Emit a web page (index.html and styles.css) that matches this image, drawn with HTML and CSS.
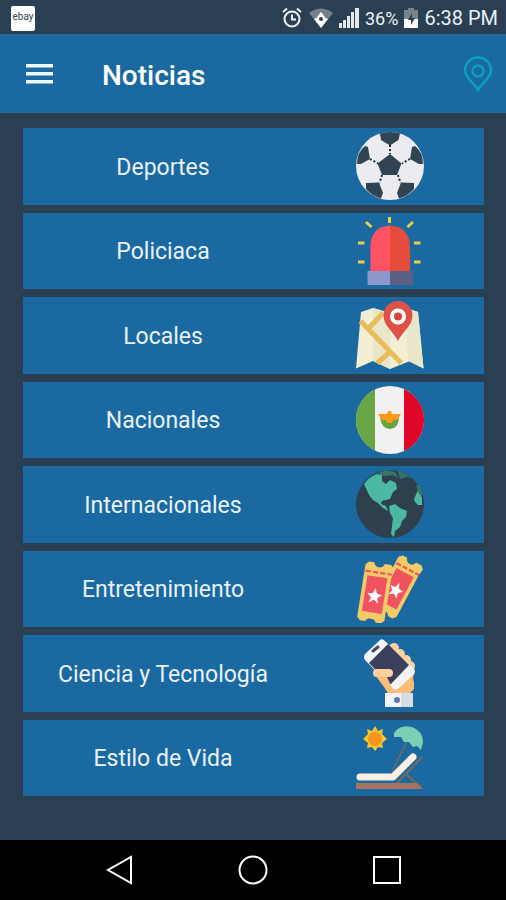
FILE: index.html
```html
<!DOCTYPE html>
<html lang="es">
<head>
  <meta charset="UTF-8">
  <meta name="viewport" content="width=device-width, initial-scale=1.0">
  <title>Noticias</title>
  <link rel="stylesheet" href="styles.css">
</head>
<body>
  <div class="status-bar">
    <span class="app-badge">ebay</span>
    <div class="status-info">
      <svg class="alarm" width="22" height="22" viewBox="0 0 22 22" fill="none" stroke="#eef2f4" stroke-width="2">
        <circle cx="11" cy="12" r="7.5"/>
        <path d="M11 7.5v5h4M2 5l4-3.500M20 5l-4-3.500"/>
      </svg>
      <svg class="wifi" width="24" height="20" viewBox="0 0 24 20">
        <path d="M0 5Q12-4 24 5L12 20z" fill="#72818d"/>
        <path d="M5 11Q12 6 19 11L12 20z" fill="#fff"/>
        <path d="M12 4l4 5h-8z" fill="#fff"/>
        <circle cx="12" cy="11" r="2" fill="#2b3f52"/>
      </svg>
      <svg class="signal" width="20" height="20" viewBox="0 0 20 20" fill="#e4e8ea">
        <path d="M0 15h3v5H0zM4 12h3v8H4zM8 8h3v12H8zM12 4h3v16h-3zM16 0h4v20h-4z"/>
      </svg>
      <span class="percent">36%</span>
      <svg class="battery" width="14" height="20" viewBox="0 0 14 20">
        <path d="M4 0h6v2h4v9H0V2h4z" fill="#77858f"/>
        <path d="M0 11h14v9H0z" fill="#fff"/>
        <path d="M8 5l-4 7h3v5l4-7H8z" fill="#2b3f52"/>
      </svg>
      <span class="clock">6:38 PM</span>
    </div>
  </div>

  <header class="app-header">
    <button class="icon-button" aria-label="Menú">
      <svg width="28" height="20" viewBox="0 0 28 20" fill="#f1f8fd">
        <path d="M0 0h27v3.500H0zM0 8h27v3.500H0zM0 16h27v3.500H0z"/>
      </svg>
    </button>
    <h1>Noticias</h1>
    <button class="icon-button" aria-label="Ubicación">
      <svg width="30" height="36" viewBox="0 0 30 36" fill="none" stroke="#0aa0bd" stroke-width="2.500">
        <path d="M15 34C11 27 2 22 2 14.500a13 13 0 0 1 26 0C28 22 19 27 15 34z"/>
        <circle cx="15" cy="15" r="5.500"/>
      </svg>
    </button>
  </header>

  <main class="categories">
    <button class="category">
      <span>Deportes</span>
      <svg viewBox="0 0 68 68">
        <circle cx="34" cy="34" r="34" fill="#ebebf0"/>
        <g fill="#324453">
          <path d="M34 22l11.500 9.500L41 43H26l-4.500-11.500z"/>
          <path d="M24 1.500Q34-1.500 44 1.500L42.500 8 34 13.500 25 8z"/>
          <path d="M1 32Q1 20 9 14l3 1 2 12-9 5z"/>
          <path d="M67 32Q67 20 59 14l-3 1-2 12 9 5z"/>
          <path d="M10 51l13-.5L27 61l-2 5.500Q16 64 10 57z"/>
          <path d="M58 51l-13-.5L41 61l2 5.500Q52 64 58 57z"/>
        </g>
        <path d="M34 13v9M14 27l8 4.500M54 27l-8 4.500M26 43l-2.500 8M42 43l2.500 8" stroke="#1e2c36" stroke-width="2" stroke-dasharray="2 2"/>
      </svg>
    </button>

    <button class="category">
      <span>Policiaca</span>
      <svg viewBox="0 0 68 68">
        <path d="M14.500 55V29Q15 10 34 8.500V55z" fill="#ff5364"/>
        <path d="M34 8.500Q53 10 54 29v26H34z" fill="#e64c3c"/>
        <path d="M11.500 54H34v14H11.500z" fill="#8c97cc"/>
        <path d="M34 54h23v14H34z" fill="#5c6184"/>
        <path d="M33.500 0v6M10 5l5.500 5M57 5l-5.500 5M2 26h6.500M2 45h6.500M58 26h6.500M58 45h6.500" stroke="#ead04a" stroke-width="3"/>
      </svg>
    </button>

    <button class="category">
      <span>Locales</span>
      <svg viewBox="0 0 68 68">
        <path d="M5 11l12-4 17 5 16-5 12 4 5.500 56.500L54 60l-20 8-17-8-17 7.500z" fill="#f3efd4"/>
        <path d="M17 7l17 5v56l-17-8zM50 7l12 4 5.500 56.500L52 60z" fill="#e9e6c9"/>
        <path d="M4.500 20L45 62M13 27l14-15M34 51L21 62" stroke="#e8bd59" stroke-width="5" fill="none"/>
        <path d="M42 40C38 31 27.500 25 27.500 14.500a14.500 14.500 0 0 1 29 0C56.500 25 46 31 42 40z" fill="#de5149"/>
        <circle cx="42" cy="15.500" r="6" fill="#d5453b" stroke="#fff" stroke-width="4"/>
      </svg>
    </button>

    <button class="category">
      <span>Nacionales</span>
      <svg viewBox="0 0 68 68">
        <circle cx="34" cy="34" r="34" fill="#f1f1f2"/>
        <path d="M19 3.500a34 34 0 0 0 0 61z" fill="#68a544"/>
        <path d="M48 3a34 34 0 0 1 0 62z" fill="#df0629"/>
        <path d="M24 32q2 11 10 11t9-11z" fill="#65a53f"/>
        <path d="M22 28h9l1-3h3l1 3h9l-4 6-3 0-3 3h-3l-3-3-3 0z" fill="#ff9719"/>
      </svg>
    </button>

    <button class="category">
      <span>Internacionales</span>
      <svg viewBox="0 0 68 68">
        <circle cx="34" cy="34" r="34" fill="#2e404e"/>
        <g fill="#4bb9a1">
          <path d="M8 14Q14 6 21 4l5 1 0 6 4 3 4-4 6 3 1 6-4 3-3 7-8 2-1 3 5 2 2 5-5-3-5-5-5-3-4-5z"/>
          <path d="M33 36l6-2 5 4 7 3-1 6-4 4-2 6-5 4-1 6-3-3 1-8 1-8-3-5z"/>
          <path d="M58 29l4-9 4 8v7l-4 0-3-3z"/>
        </g>
        <path d="M20 4l10-4 9 2 4 6-7-3-6 1zM42 1q8 2 13 7l-5-1-6 2zM60 15l4 1 3 10-4-2z" fill="#367466"/>
      </svg>
    </button>

    <button class="category">
      <span>Entretenimiento</span>
      <svg viewBox="0 0 68 68">
        <defs>
          <g id="ticket">
            <path d="M3 0h5q1 4 5 4t5-4h6l3 3-1 6v44l-3 3h-5q-1-3-5-3t-5 3H3l-3-3V3z" fill="#f1cb67"/>
            <path d="M3.500 13h19v34h-19z" fill="#ef5360"/>
            <path d="M1 9h25" stroke="#ef5360" stroke-width="2" stroke-dasharray="5 2"/>
            <path d="M13 24l2 5 5 .5-4 3.500 1.500 5-4.500-3-4.500 3 1.500-5-4-3.500 5-.5z" fill="#fff"/>
          </g>
        </defs>
        <use href="#ticket" transform="translate(44 -1) rotate(28) scale(1.020 1.080)"/>
        <use href="#ticket" transform="translate(10 6) rotate(9) scale(1.060)"/>
      </svg>
    </button>

    <button class="category">
      <span>Ciencia y Tecnología</span>
      <svg viewBox="0 0 68 68">
        <g fill="#ffcf9c">
          <circle cx="38" cy="9" r="5"/>
          <circle cx="44" cy="15" r="5"/>
          <circle cx="50" cy="21" r="5"/>
          <circle cx="54" cy="27" r="5"/>
        </g>
        <path d="M19 36l14 3 7 10 18-16-1 7 1 3v7l-5 5H32l-2-6z" fill="#fdbd78"/>
        <path d="M9 15L24 1q2-2 5 1l29 28q2 3 0 5L42 50q-3 2-6-1L9 21q-2-3 0-6z" fill="#f2f4f7"/>
        <path d="M13 24L32 5l21 21-18 19-2 0z" fill="#3d405d"/>
        <path d="M17 12l5-4" stroke="#45485f" stroke-width="3" stroke-linecap="round"/>
        <path d="M21 34h12" stroke="#ffd0a0" stroke-width="8" stroke-linecap="round"/>
        <path d="M20 37l11 1 5 11-3 6z" fill="#fdbd78"/>
        <path d="M29 54h16v14H29z" fill="#f3f5f8"/>
        <path d="M45 54h12v14H45z" fill="#d5dce2"/>
        <circle cx="41" cy="61" r="3" fill="#6774b4"/>
      </svg>
    </button>

    <button class="category">
      <span>Estilo de Vida</span>
      <svg viewBox="0 0 68 68">
        <path d="M19 2l3 5 5-2-1 5 5 5-5 4 1 5-5-1-3 4-3-4-5 1 1-5-5-4 5-5-1-5 5 2z" fill="#f4c630"/>
        <circle cx="19" cy="15" r="7" fill="#f7941e"/>
        <path d="M51 17L36 48" stroke="#75695e" stroke-width="1.500"/>
        <path d="M38 9Q44 0 56 3q11 4 11 15l-2 8-4-4-4 1-4-5-5 0-3-5-7 0z" fill="#7acfb5"/>
        <path d="M66 33L41 59M51 51l15 13" stroke="#80675b" stroke-width="2"/>
        <path d="M0 59h60l7 6H0z" fill="#a47661"/>
        <path d="M4 53h33l20-20" fill="none" stroke="#fbf0e1" stroke-width="7" stroke-linecap="round" stroke-linejoin="round"/>
      </svg>
    </button>
  </main>

  <nav class="nav-bar">
    <button class="icon-button" aria-label="Atrás">
      <svg width="30" height="30" viewBox="0 0 30 30" fill="none" stroke="#fff" stroke-width="2">
        <path d="M27 2v26L4 15z"/>
      </svg>
    </button>
    <button class="icon-button" aria-label="Inicio">
      <svg width="30" height="30" viewBox="0 0 30 30" fill="none" stroke="#fff" stroke-width="2">
        <circle cx="15" cy="15" r="13.500"/>
      </svg>
    </button>
    <button class="icon-button" aria-label="Recientes">
      <svg width="30" height="30" viewBox="0 0 30 30" fill="none" stroke="#fff" stroke-width="2">
        <path d="M2 2h26v26H2z"/>
      </svg>
    </button>
  </nav>
</body>
</html>
```

FILE: styles.css
```css
:root {
  --bg: #2b3f52;
  --primary: #1a6aa1;
  --text: #e9f1f8;
}

* {
  margin: 0;
  padding: 0;
  box-sizing: border-box;
}

body {
  background: var(--bg);
  color: var(--text);
  font-family: Roboto, sans-serif;
  display: flex;
  flex-direction: column;
  min-height: 100vh;
}

button {
  background: none;
  border: none;
  color: inherit;
  font-family: inherit;
  cursor: pointer;
}

svg {
  display: block;
}

.status-bar {
  display: flex;
  align-items: center;
  justify-content: space-between;
  height: 34px;
  padding: 2px 8px 0 11px;
}

.app-badge {
  width: 24px;
  height: 25px;
  border-radius: 2px;
  background: #fff;
  color: #34404a;
  font-size: 10px;
  line-height: 22px;
  text-align: center;
}

.status-info {
  display: flex;
  align-items: center;
  gap: 6px;
}

.percent {
  font-size: 18px;
}

.clock {
  font-size: 20px;
}

.app-header {
  display: flex;
  align-items: center;
  height: 79px;
  padding: 0 13px 0 26px;
  background: var(--primary);
}

.app-header h1 {
  flex: 1;
  padding: 3px 0 0 48px;
  font-size: 28px;
  font-weight: 500;
  color: #fff;
}

.categories {
  flex: 1;
  display: grid;
  grid-auto-rows: 1fr;
  gap: 8px;
  padding: 15px 22px 44px 23px;
}

.category {
  display: grid;
  grid-template-columns: 1fr 173px;
  align-items: center;
  justify-items: center;
  padding-right: 8px;
  background: var(--primary);
  font-size: 23px;
}

.category span {
  padding-top: 2px;
}

.category svg {
  width: 68px;
  height: 68px;
}

.nav-bar {
  display: flex;
  align-items: center;
  justify-content: center;
  gap: 104px;
  height: 60px;
  background: #000;
}
```
